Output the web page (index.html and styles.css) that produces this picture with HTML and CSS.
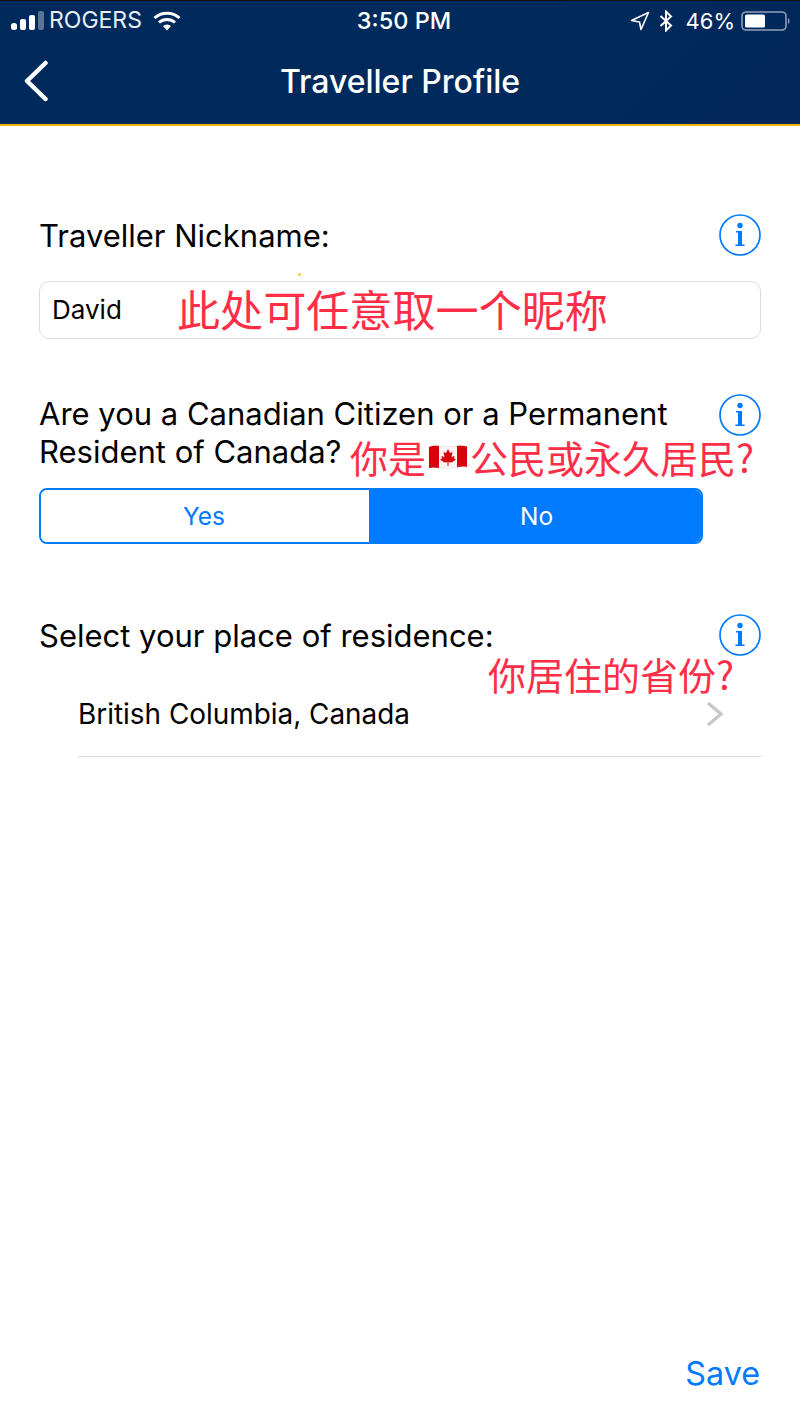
FILE: index.html
```html
<!DOCTYPE html>
<html lang="en">
<head>
<meta charset="utf-8">
<title>Traveller Profile</title>
<link rel="stylesheet" href="styles.css">
</head>
<body>
<div class="app">
  <header class="header">
    <div class="status">
      <div class="status-left">
        <svg class="signal" width="34" height="20" viewBox="0 0 34 20"><rect x="0" y="12" width="6" height="7" rx="2.5" fill="#fff"/><rect x="9" y="8" width="6" height="11" rx="2" fill="#fff"/><rect x="18" y="4" width="6" height="15" rx="2" fill="#fff"/><rect x="27" y="0" width="6" height="19" rx="2" fill="#fff" opacity=".35"/></svg>
        <span class="carrier">ROGERS</span>
        <svg class="wifi" width="28" height="20" viewBox="0 0 28 20"><path d="M1.5 7 C8.5 0.5 19.5 0.5 26.5 7" fill="none" stroke="#fff" stroke-width="3"/><path d="M6 11.5 C10.5 7.5 17.5 7.5 22 11.5" fill="none" stroke="#fff" stroke-width="3"/><path d="M10 15 C12.5 13 15.5 13 18 15 L14 19.5 Z" fill="#fff"/></svg>
      </div>
      <span class="clock">3:50 PM</span>
      <div class="status-right">
        <svg class="loc" width="20" height="20" viewBox="0 0 20 20"><path d="M18.5 1.5 L1.5 9.5 L9.5 11 L11 18.5 Z" fill="none" stroke="#fff" stroke-width="1.6" stroke-linejoin="round"/></svg>
        <svg class="bt" width="14" height="22" viewBox="0 0 14 22"><path d="M1.5 6 L12 15.5 L7 20.5 L7 1.5 L12 6.5 L1.5 16" fill="none" stroke="#fff" stroke-width="2"/></svg>
        <span class="battery-pct">46%</span>
        <svg class="battery" width="50" height="22" viewBox="0 0 50 22"><rect x="1" y="2" width="44" height="18" rx="4" fill="none" stroke="#8fa0ba" stroke-width="1.6"/><rect x="4" y="4.5" width="20" height="13" rx="1.5" fill="#fff"/><path d="M47 8 C49 9 49 13 47 14 Z" fill="#8fa0ba"/></svg>
      </div>
    </div>
    <div class="nav">
      <svg class="back" width="26" height="42" viewBox="0 0 26 42"><path d="M22.5 3 L4 21 L22.5 39" fill="none" stroke="#fff" stroke-width="4.5" stroke-linecap="round" stroke-linejoin="round"/></svg>
      <h1 class="title">Traveller Profile</h1>
    </div>
  </header>

  <main class="content">
    <section class="field field-nick">
      <div class="label-row">
        <label class="label">Traveller Nickname:</label>
        <svg class="info" viewBox="0 0 42 42"><use href="#info-icon"/></svg>
      </div>
      <div class="input">
        <span>David</span>
        <span class="note note-nick" lang="zh-CN">此处可任意取一个昵称</span>
      </div>
      <span class="speck"></span>
    </section>

    <section class="field field-citizen">
      <div class="label-row">
        <label class="label">Are you a Canadian Citizen or a Permanent<br>Resident of Canada?</label>
        <svg class="info" viewBox="0 0 42 42"><use href="#info-icon"/></svg>
      </div>
      <span class="note note-citizen" lang="zh-CN">你是<svg class="flag" width="40" height="28" viewBox="0 0 40 28"><path d="M1 4 C10 1 18 5 28 3 C32 2.4 36 2.6 39 3.6 L39 24 C36 23.4 32 23.4 28 24.4 C18 27 10 23 1 25 Z" fill="#fbf4f2" stroke="#e7dada" stroke-width=".6"/><path d="M1 4 C4 3 7 2.6 11 3 L11 25 C7 24.2 4 24.3 1 25 Z" fill="#d8000c"/><path d="M39 3.6 C36 2.6 33 2.4 29 3 L29 24.2 C33 23.4 36 23.4 39 24 Z" fill="#d8000c"/><path d="M20 6 L22 10 L24.5 9 L23.5 14 L26.5 13 L26 15.5 L28 16.5 L23.5 19.5 L20.5 19.2 L20.5 23 L19.5 23 L19.5 19.2 L16.5 19.5 L12 16.5 L14 15.5 L13.5 13 L16.5 14 L15.5 9 L18 10 Z" fill="#d8000c"/></svg>公民或永久居民?</span>
      <div class="segment">
        <div class="seg seg-off">Yes</div>
        <div class="seg seg-on">No</div>
      </div>
    </section>

    <section class="field field-place">
      <div class="label-row">
        <label class="label">Select your place of residence:</label>
        <svg class="info" viewBox="0 0 42 42"><use href="#info-icon"/></svg>
      </div>
      <span class="note note-place" lang="zh-CN">你居住的省份?</span>
      <div class="select-row">
        <span>British Columbia, Canada</span>
        <svg class="chev" width="18" height="26" viewBox="0 0 18 26"><path d="M2 2 L15 13 L2 24" fill="none" stroke="#c7c7cc" stroke-width="3.4"/></svg>
      </div>
    </section>
  </main>

  <footer class="footer"><span class="save">Save</span></footer>
</div>

<svg class="defs" width="0" height="0">
  <symbol id="info-icon" viewBox="0 0 42 42">
    <circle cx="21" cy="21" r="20" fill="none" stroke="#007aff" stroke-width="1.7"/>
    <circle cx="21" cy="11.5" r="2.7" fill="#007aff"/>
    <path d="M17 17 H23 V30.6 H25.6 V32 H16.4 V30.6 H19 V18.4 H17 Z" fill="#007aff"/>
  </symbol>
</svg>
</body>
</html>
```
FILE: styles.css
```css
* { box-sizing: border-box; }
html, body { margin: 0; padding: 0; background: #fff; }
body { font-family: Inter, "Liberation Sans", "Noto Sans CJK SC", sans-serif; color: #000; }

.app { width: 800px; height: 1422px; display: flex; flex-direction: column; overflow: hidden; }

.header {
  height: 126px;
  padding-top: 2px;
  background: linear-gradient(135deg, #012a5c 0%, #012a5c 60%, #02275a 100%);
  border-top: 1px solid #111;
  border-bottom: 2px solid #f5b400;
  color: #fff;
  display: flex;
  flex-direction: column;
  flex: none;
}
.status { height: 35px; padding: 0 9px 0 11px; display: grid; grid-template-columns: 1fr auto 1fr; align-items: center; }
.status-left { display: flex; align-items: center; gap: 4px; }
.status-right { display: flex; align-items: center; justify-content: flex-end; gap: 11px; }
.carrier, .clock { font-size: 23px; line-height: 1; font-weight: 400; }
.battery-pct { font-size: 22px; line-height: 1; font-weight: 400; }
.clock { font-size: 23.5px; font-weight: 500; margin-left: 6px; }
.carrier { color: #e8edf4; }
.wifi { margin-left: 7px; }
.loc { margin-right: -2px; }
.battery-pct { margin-left: 2px; }
.battery { margin-left: -5px; }

.nav { flex: 1; display: flex; align-items: center; justify-content: center; position: relative; padding-top: 2px; }
.back { position: absolute; left: 23px; top: 22px; }
.title { margin: 0; font-size: 32px; line-height: 1; font-weight: 500; }

.content { flex: 1; display: flex; flex-direction: column; padding: 0 39px; }
.field { position: relative; }
.field-nick { margin-top: 88px; }
.field-citizen { margin-top: 55px; }
.field-place { margin-top: 70px; }

.label-row { display: flex; justify-content: space-between; align-items: flex-start; }
.label { font-size: 31px; line-height: 38px; white-space: nowrap; }
.field-nick .label { padding-top: 3px; }
.field-citizen .label { padding-top: 1px; }
.field-place .label { padding-top: 3px; }
.info { width: 42px; height: 42px; flex: none; }
.defs { position: absolute; }

.input {
  margin-top: 25px;
  height: 58px;
  border: 1px solid #dcdcdc;
  border-radius: 10px;
  padding: 0 12px 2px;
  display: flex;
  align-items: center;
  font-size: 26px;
  position: relative;
}
.speck { position: absolute; left: 259px; top: 59px; width: 3px; height: 3px; border-radius: 50%; background: #ffcc33; }

.note {
  position: absolute;
  color: #ff2d46;
  font-family: "Noto Sans CJK SC", sans-serif;
  white-space: nowrap;
  line-height: 1;
}
.note-nick { font-size: 43.1px; left: 137px; top: 5px; }
.note-citizen { font-size: 38px; left: 311px; top: 44px; display: flex; align-items: center; }
.note-place { font-size: 38px; left: 449px; top: 41px; }
.flag { margin: 0 2px; }

.segment {
  margin-top: 17px;
  width: 664px;
  height: 56px;
  display: flex;
  border: 2px solid #007aff;
  border-radius: 8px;
  overflow: hidden;
  font-size: 24.5px;
}
.seg { display: flex; align-items: center; justify-content: center; }
.seg-off { flex: none; width: 328px; padding-right: 2px; color: #007aff; background: #fff; }
.seg-on { flex: 1; padding-left: 3px; color: #fff; background: #007aff; }

.select-row {
  margin: 37px 0 0 39px;
  height: 64px;
  padding: 0 37px 22px 0;
  border-bottom: 1px solid #d9d9d9;
  display: flex;
  justify-content: space-between;
  align-items: center;
  font-size: 27.9px;
}

.footer { flex: none; display: flex; justify-content: flex-end; padding: 0 40px 28px 0; }
.save { font-size: 32.3px; line-height: 40px; color: #007aff; }
```
